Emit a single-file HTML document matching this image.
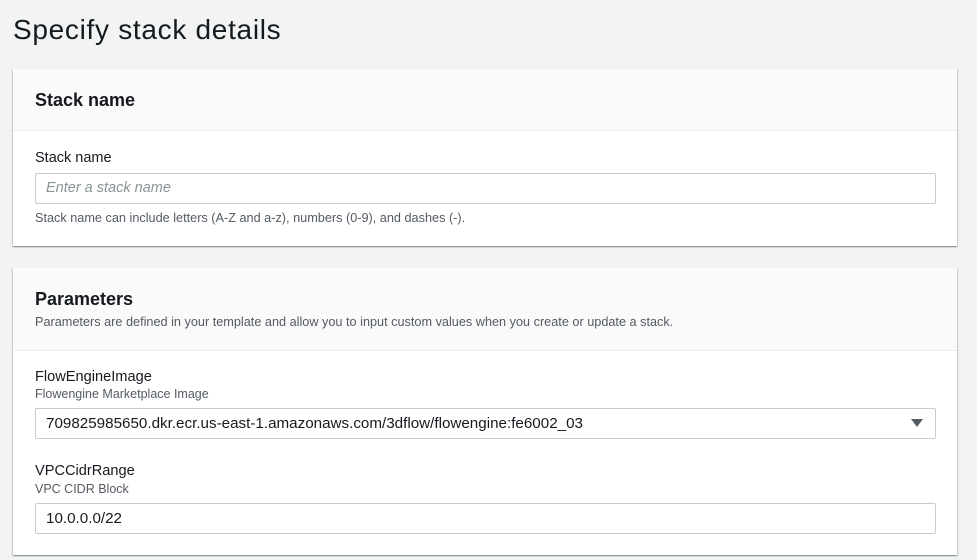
<!DOCTYPE html><html><head><style>
body{margin:0;background:#f2f3f3;font-family:"Liberation Sans",sans-serif;color:#16191f;width:977px;height:560px;overflow:hidden;position:relative}
.a{position:absolute;white-space:nowrap}
.card{position:absolute;left:13px;width:944px;background:#fff;box-shadow:0 1px 1px 0 rgba(0,28,36,.3),1px 1px 1px 0 rgba(0,28,36,.15),-1px 1px 1px 0 rgba(0,28,36,.15)}
.hd{position:absolute;left:0;top:0;width:944px;background:#fafafa;border-bottom:1px solid #eaeded}
.inp{position:absolute;left:35px;width:899px;height:29px;border:1px solid #c6cccc;border-radius:2px;background:#fff}
</style></head><body>
<div class="a" style="left:13px;top:14px;font-size:28px;letter-spacing:0.7px;color:#16191f">Specify stack details</div>
<div class="card" style="top:69px;height:177px"><div class="hd" style="height:61px"></div></div>
<div class="a" style="left:35px;top:90px;font-size:18px;font-weight:bold">Stack name</div>
<div class="a" style="left:35px;top:150px;font-size:14.5px">Stack name</div>
<div class="inp" style="top:173px"></div>
<div class="a" style="left:46px;top:180px;font-size:14.5px;font-style:italic;color:#879596">Enter a stack name</div>
<div class="a" style="left:35px;top:211px;font-size:12.7px;color:#545b64">Stack name can include letters (A-Z and a-z), numbers (0-9), and dashes (-).</div>
<div class="card" style="top:268px;height:287px"><div class="hd" style="height:82px"></div></div>
<div class="a" style="left:35px;top:289px;font-size:18px;font-weight:bold">Parameters</div>
<div class="a" style="left:35px;top:315px;font-size:12.7px;color:#545b64">Parameters are defined in your template and allow you to input custom values when you create or update a stack.</div>
<div class="a" style="left:35px;top:369px;font-size:14.6px">FlowEngineImage</div>
<div class="a" style="left:35px;top:387px;font-size:12.5px;color:#545b64">Flowengine Marketplace Image</div>
<div class="inp" style="top:408px"></div>
<div class="a" style="left:46px;top:415px;font-size:15.2px">709825985650.dkr.ecr.us-east-1.amazonaws.com/3dflow/flowengine:fe6002_03</div>
<svg class="a" style="left:911px;top:419px" width="12" height="9"><path d="M0 0H12L6 8Z" fill="#545b64"/></svg>
<div class="a" style="left:35px;top:463px;font-size:14.6px">VPCCidrRange</div>
<div class="a" style="left:35px;top:482px;font-size:12.5px;color:#545b64">VPC CIDR Block</div>
<div class="inp" style="top:503px"></div>
<div class="a" style="left:46px;top:510px;font-size:15.2px">10.0.0.0/22</div>
</body></html>
